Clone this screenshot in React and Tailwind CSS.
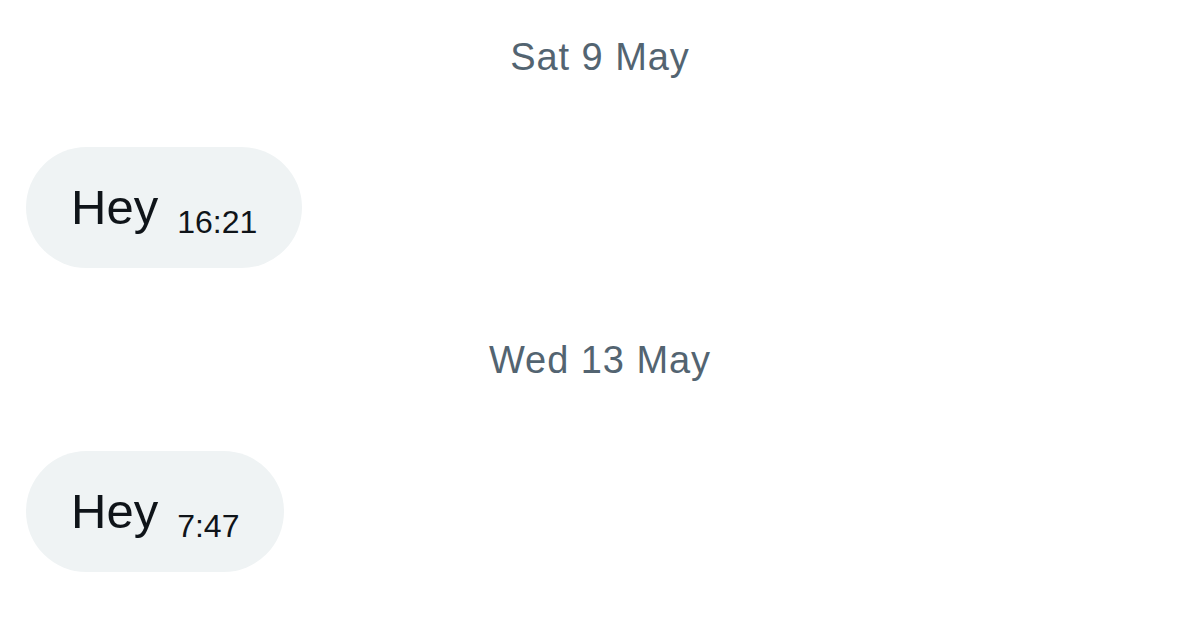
export default function App() {
  const font = { fontFamily: '"Liberation Sans", Arial, sans-serif' };
  return (
    <div className="w-[1200px] h-[619px] bg-white overflow-hidden px-[26px]" style={font}>
      <div className="h-[114px] flex items-center justify-center">
        <span className="text-[38px] leading-none tracking-[0.025em] text-[#536471]">Sat 9 May</span>
      </div>
      <div className="mt-[33px] flex">
        <div className="h-[121px] rounded-full bg-[#eff3f4] flex items-center pt-[10px] pl-[45px] pr-[45px]">
          <div className="leading-[48px] text-[#0f1419] whitespace-nowrap">
            <span className="text-[49px]">Hey</span>
            <span className="text-[32px] leading-none ml-[19px] relative top-[9px]">16:21</span>
          </div>
        </div>
      </div>
      <div className="mt-[35px] h-[114px] flex items-center justify-center">
        <span className="text-[38px] leading-none tracking-[0.025em] text-[#536471]">Wed 13 May</span>
      </div>
      <div className="mt-[34px] flex">
        <div className="h-[121px] rounded-full bg-[#eff3f4] flex items-center pt-[10px] pl-[45px] pr-[45px]">
          <div className="leading-[48px] text-[#0f1419] whitespace-nowrap">
            <span className="text-[49px]">Hey</span>
            <span className="text-[32px] leading-none ml-[19px] relative top-[9px]">7:47</span>
          </div>
        </div>
      </div>
    </div>
  );
}
